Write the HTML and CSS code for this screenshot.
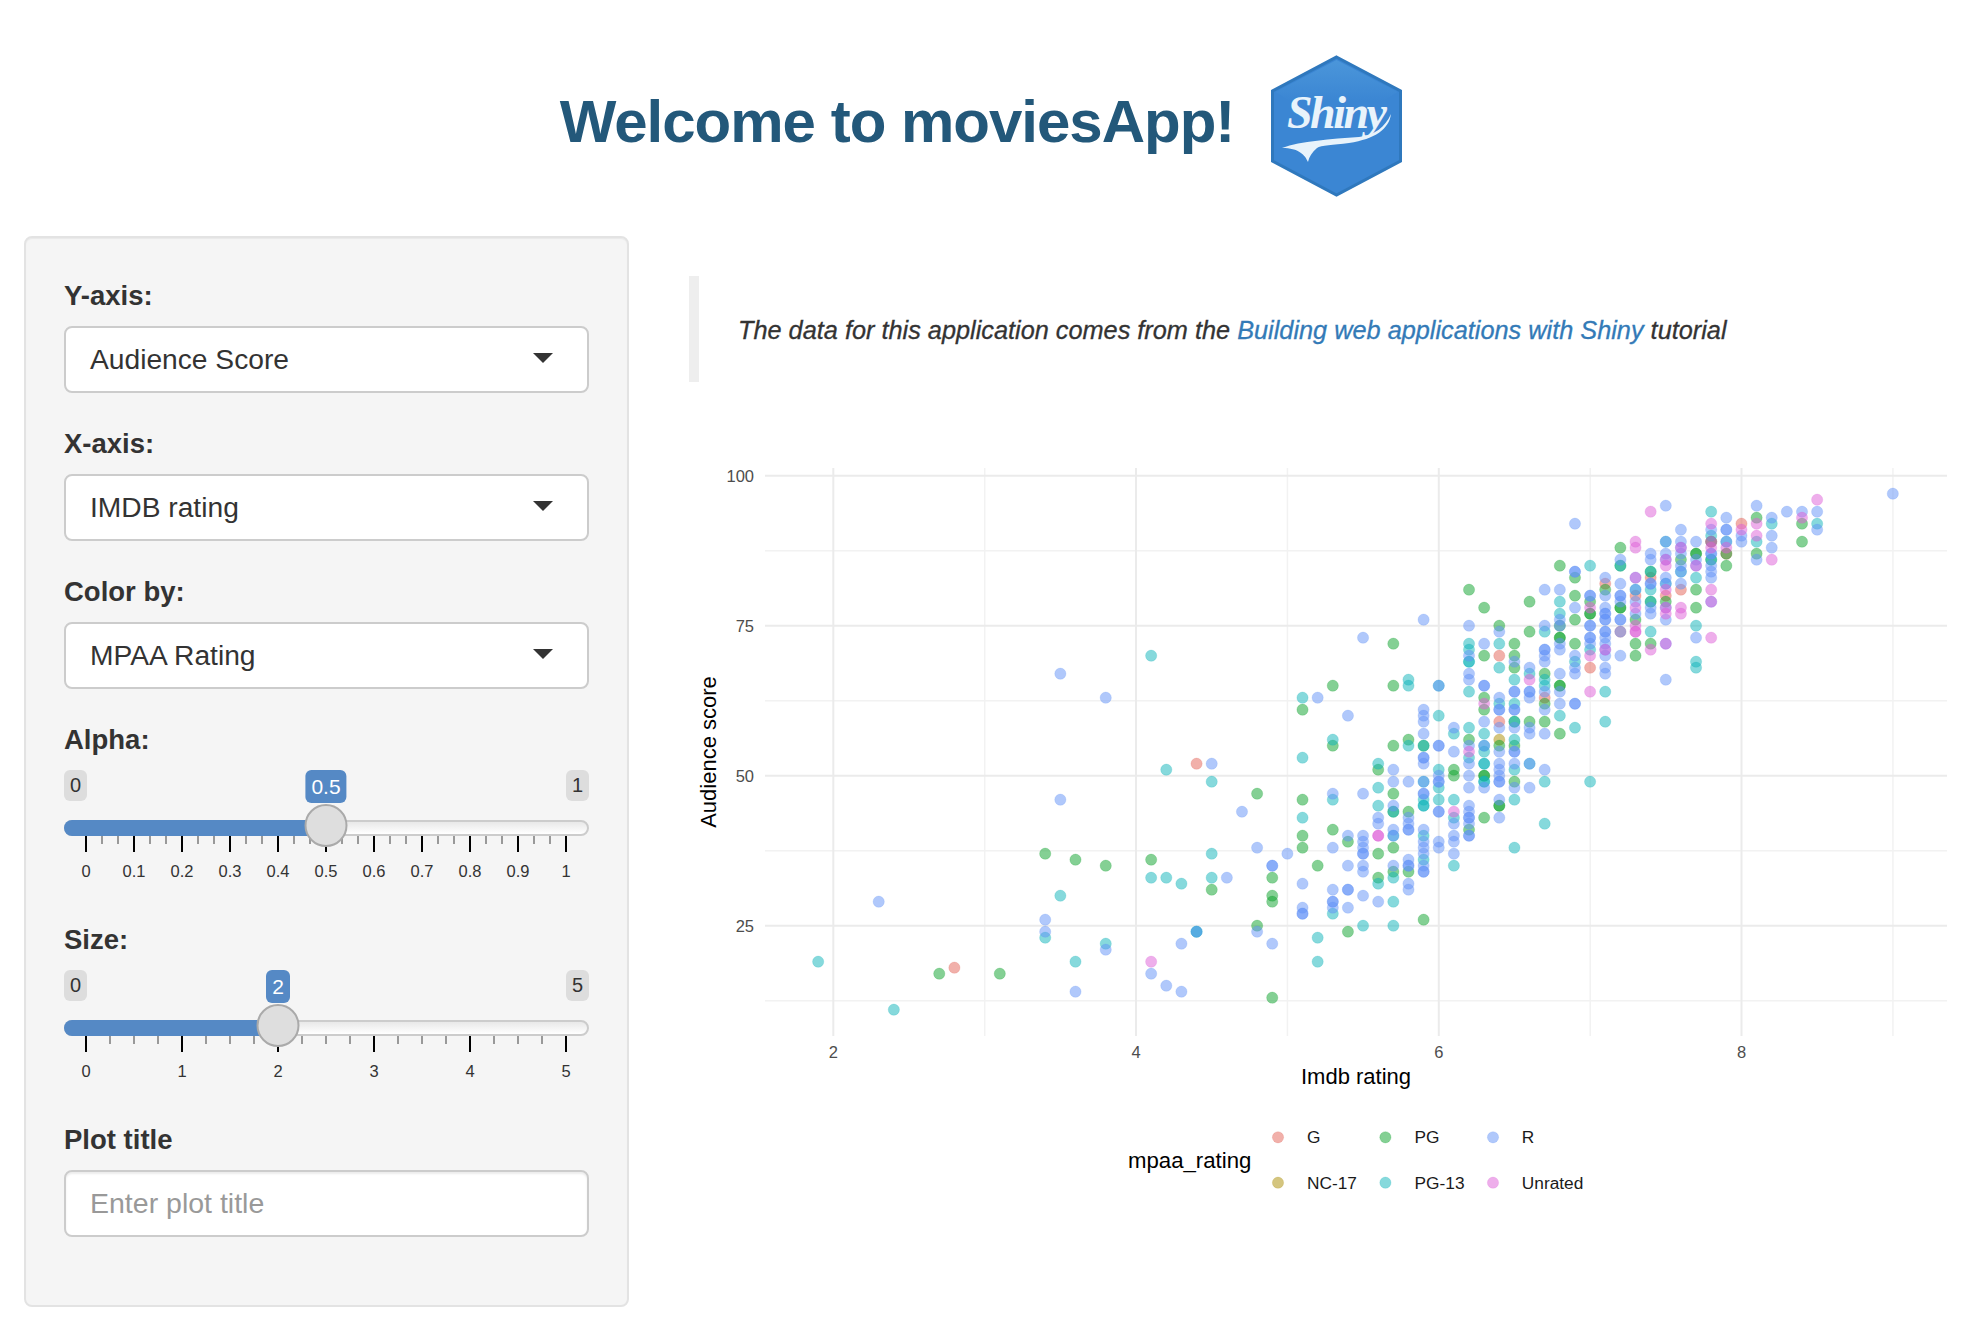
FILE: index.html
```html
<!DOCTYPE html>
<html lang="en">
<head>
    <meta charset="UTF-8">
    <meta name="viewport" content="width=device-width, initial-scale=1.0">
    <title>moviesApp</title>
    <link rel="stylesheet" href="styles.css">
</head>
<body>
    <header class="app-header">
        <h1>Welcome to moviesApp!</h1>
        <svg class="shiny-logo" viewBox="0 0 131 142" width="131" height="142">
            <defs>
                <linearGradient id="hexShine" x1="0" y1="0" x2="0" y2="1">
                    <stop offset="0" stop-color="#4b96da"/>
                    <stop offset="1" stop-color="#3b86d3"/>
                </linearGradient>
            </defs>
            <polygon class="hex" points="65.5,2 129.5,36 129.5,106 65.5,140 1.5,106 1.5,36"/>
            <polygon class="hex-top" points="65.5,5 126.500,37 112,46 19,46 4.500,37"/>
            <text class="hex-word" x="16" y="73" textLength="100">Shiny</text>
            <path class="hex-word" d="M11 93 C30 86 60 84 88 82 C104 80 114 72 120 59 C118 74 104 84 78 88 C62 90 50 90 46 93 C41 97 38 102 37 107 C34 100 28 93 11 93 Z"/>
        </svg>
    </header>

    <div class="layout">
        <aside class="well">
            <div class="form-group">
                <label>Y-axis:</label>
                <div class="select-box"><span>Audience Score</span><i class="caret"></i></div>
            </div>
            <div class="form-group">
                <label>X-axis:</label>
                <div class="select-box"><span>IMDB rating</span><i class="caret"></i></div>
            </div>
            <div class="form-group">
                <label>Color by:</label>
                <div class="select-box"><span>MPAA Rating</span><i class="caret"></i></div>
            </div>

            <div class="form-group slider-group">
                <label>Alpha:</label>
                <div class="slider">
                    <div class="slider-limits"><span>0</span><span>1</span></div>
                    <div class="slider-track">
                        <div class="slider-rail">
                            <div class="slider-fill" style="width: calc(50% + 22px)"></div>
                            <div class="slider-value" style="left: 50%">0.5</div>
                            <div class="slider-handle" style="left: 50%"></div>
                        </div>
                    </div>
                    <div class="tick-row">
                        <i class="major"></i><i></i><i></i><i class="major"></i><i></i><i></i><i class="major"></i><i></i><i></i><i class="major"></i><i></i><i></i><i class="major"></i><i></i><i></i><i class="major"></i><i></i><i></i><i class="major"></i><i></i><i></i><i class="major"></i><i></i><i></i><i class="major"></i><i></i><i></i><i class="major"></i><i></i><i></i><i class="major"></i>
                    </div>
                    <div class="tick-labels">
                        <span>0</span><span>0.1</span><span>0.2</span><span>0.3</span><span>0.4</span><span>0.5</span><span>0.6</span><span>0.7</span><span>0.8</span><span>0.9</span><span>1</span>
                    </div>
                </div>
            </div>

            <div class="form-group slider-group">
                <label>Size:</label>
                <div class="slider">
                    <div class="slider-limits"><span>0</span><span>5</span></div>
                    <div class="slider-track">
                        <div class="slider-rail">
                            <div class="slider-fill" style="width: calc(40% + 22px)"></div>
                            <div class="slider-value" style="left: 40%">2</div>
                            <div class="slider-handle" style="left: 40%"></div>
                        </div>
                    </div>
                    <div class="tick-row">
                        <i class="major"></i><i></i><i></i><i></i><i class="major"></i><i></i><i></i><i></i><i class="major"></i><i></i><i></i><i></i><i class="major"></i><i></i><i></i><i></i><i class="major"></i><i></i><i></i><i></i><i class="major"></i>
                    </div>
                    <div class="tick-labels">
                        <span>0</span><span>1</span><span>2</span><span>3</span><span>4</span><span>5</span>
                    </div>
                </div>
            </div>

            <div class="form-group">
                <label for="plotTitle">Plot title</label>
                <input type="text" id="plotTitle" placeholder="Enter plot title">
            </div>
        </aside>

        <main class="main-panel">
            <blockquote class="note">
                <em>The data for this application comes from the <a href="#">Building web applications with Shiny</a> tutorial</em>
            </blockquote>

            <!-- viewBox uses page pixels so the plot scales below match the screenshot -->
            <svg id="plot" class="plot" viewBox="689 440 1293 800" width="1293" height="800">
                <g class="grid-minor">
                    <line x1="765" x2="1947" y1="550.700" y2="550.700"/>
                    <line x1="765" x2="1947" y1="700.700" y2="700.700"/>
                    <line x1="765" x2="1947" y1="850.700" y2="850.700"/>
                    <line x1="765" x2="1947" y1="1000.700" y2="1000.700"/>
                    <line x1="984.700" x2="984.700" y1="468" y2="1036"/>
                    <line x1="1287.400" x2="1287.400" y1="468" y2="1036"/>
                    <line x1="1590.200" x2="1590.200" y1="468" y2="1036"/>
                    <line x1="1892.900" x2="1892.900" y1="468" y2="1036"/>
                </g>
                <g class="grid-major">
                    <line x1="765" x2="1947" y1="475.700" y2="475.700"/>
                    <line x1="765" x2="1947" y1="625.700" y2="625.700"/>
                    <line x1="765" x2="1947" y1="775.700" y2="775.700"/>
                    <line x1="765" x2="1947" y1="925.700" y2="925.700"/>
                    <line x1="833.300" x2="833.300" y1="468" y2="1036"/>
                    <line x1="1136" x2="1136" y1="468" y2="1036"/>
                    <line x1="1438.800" x2="1438.800" y1="468" y2="1036"/>
                    <line x1="1741.500" x2="1741.500" y1="468" y2="1036"/>
                </g>
                <g id="points"></g>
                <g class="tick-y">
                    <text x="754" y="482">100</text>
                    <text x="754" y="632">75</text>
                    <text x="754" y="782">50</text>
                    <text x="754" y="932">25</text>
                </g>
                <g class="tick-x">
                    <text x="833.300" y="1058">2</text>
                    <text x="1136" y="1058">4</text>
                    <text x="1438.800" y="1058">6</text>
                    <text x="1741.500" y="1058">8</text>
                </g>
                <text class="axis-title" x="1356" y="1083.500">Imdb rating</text>
                <text class="axis-title" transform="translate(716 752) rotate(-90)">Audience score</text>

                <text class="legend-title" x="1128" y="1168">mpaa_rating</text>
                <g id="legend" class="legend-labels">
                    <text x="1307" y="1143">G</text>
                    <text x="1307" y="1188.500">NC-17</text>
                    <text x="1414.600" y="1143">PG</text>
                    <text x="1414.600" y="1188.500">PG-13</text>
                    <text x="1521.800" y="1143">R</text>
                    <text x="1521.800" y="1188.500">Unrated</text>
                </g>
            </svg>
        </main>
    </div>

    <script src="plot.js"></script>
</body>
</html>
```

FILE: styles.css
```css
/* Basic page */
body {
    font-family: "Liberation Sans", Arial, sans-serif;
    color: #333;
    background-color: #fff;
    margin: 0;
}

/* Title row */
.app-header {
    display: flex;
    align-items: center;
    justify-content: center;
    height: 236px;
    padding-top: 16px;
    padding-right: 20px;
    box-sizing: border-box;
}

.app-header h1 {
    margin: 0 37px 10px 0;
    font-size: 60px;
    font-weight: bold;
    letter-spacing: -1px;
    color: #23587a;
}

.hex {
    fill: #3b86d3;
    stroke: #2f78bd;
    stroke-width: 3;
}

.hex-top {
    fill: url(#hexShine);
}

.hex-word {
    fill: #e8f3fb;
}

text.hex-word {
    font-family: "Liberation Serif", serif;
    font-size: 46px;
    font-style: italic;
    font-weight: bold;
}

/* Main layout */
.layout {
    display: flex;
    align-items: flex-start;
    padding-left: 24px;
}

.well {
    width: 605px;
    height: 1071px;
    box-sizing: border-box;
    padding: 40px 38px 0;
    background-color: #f5f5f5;
    border: 2px solid #e3e3e3;
    border-radius: 8px;
    box-shadow: inset 0 1px 1px rgba(0, 0, 0, 0.05);
}

.form-group {
    margin-bottom: 33px;
}

.form-group label {
    display: block;
    height: 36px;
    line-height: 36px;
    margin-bottom: 12px;
    font-size: 27.500px;
    font-weight: bold;
}

.slider-group {
    margin-bottom: 0;
}

/* Select boxes */
.select-box {
    display: flex;
    align-items: center;
    justify-content: space-between;
    height: 67px;
    box-sizing: border-box;
    padding: 0 34px 0 24px;
    background-color: #fff;
    border: 2px solid #ccc;
    border-radius: 8px;
    font-size: 28.200px;
}

.caret {
    width: 0;
    height: 0;
    border-top: 10px solid #333;
    border-left: 10px solid transparent;
    border-right: 10px solid transparent;
    margin-top: -4px;
}

#plotTitle {
    display: block;
    width: 100%;
    height: 67px;
    box-sizing: border-box;
    padding: 0 24px;
    font-family: inherit;
    font-size: 28.500px;
    color: #333;
    background-color: #fff;
    border: 2px solid #ccc;
    border-radius: 8px;
    box-shadow: inset 0 2px 2px rgba(0, 0, 0, 0.075);
}

#plotTitle::placeholder {
    color: #999;
    opacity: 1;
}

/* Sliders */
.slider {
    height: 152px;
}

.slider-limits {
    display: flex;
    justify-content: space-between;
    height: 50px;
}

.slider-limits span {
    height: 31px;
    min-width: 23px;
    box-sizing: border-box;
    padding: 0 1px;
    text-align: center;
    line-height: 30px;
    font-size: 20px;
    background-color: #ddd;
    border-radius: 6px;
}

.slider-track {
    position: relative;
    height: 16px;
    box-sizing: border-box;
    background: linear-gradient(to bottom, #ddd -50%, #fff);
    border: 2px solid #ccc;
    border-radius: 8px;
}

.slider-rail {
    position: absolute;
    top: 0;
    left: 20px;
    right: 21px;
}

.slider-fill {
    position: absolute;
    top: -2px;
    left: -22px;
    height: 16px;
    background-color: #5589c5;
    border-radius: 8px 0 0 8px;
}

.slider-value {
    position: absolute;
    top: -52px;
    transform: translateX(-50%);
    height: 33px;
    min-width: 24px;
    box-sizing: border-box;
    padding: 0 6px;
    line-height: 33px;
    text-align: center;
    font-size: 21px;
    color: #fff;
    background-color: #5589c5;
    border-radius: 6px;
}

.slider-handle {
    position: absolute;
    top: -18px;
    transform: translateX(-50%);
    width: 43px;
    height: 43px;
    box-sizing: border-box;
    background-color: #dedede;
    border: 2px solid #aaa;
    border-radius: 50%;
}

.tick-row,
.tick-labels {
    display: flex;
    justify-content: space-between;
    padding: 0 22px 0 21px;
}

.tick-row {
    height: 16px;
}

.tick-row i {
    width: 2px;
    height: 8px;
    background-color: #999;
}

.tick-row i.major {
    height: 16px;
    background-color: #000;
}

.tick-labels {
    margin-top: 9px;
    line-height: 20px;
    font-size: 16.500px;
}

.tick-labels span {
    display: flex;
    justify-content: center;
    width: 2px;
}

/* Right side */
.main-panel {
    margin-left: 60px;
    padding-top: 40px;
}

.note {
    display: flex;
    align-items: center;
    height: 106px;
    box-sizing: border-box;
    margin: 0 0 58px;
    padding: 3px 0 0 39px;
    border-left: 10px solid #eee;
    font-size: 25.300px;
    -webkit-text-stroke: 0.300px;
}

.note a {
    color: #337ab7;
    text-decoration: none;
}

.plot {
    display: block;
}

.grid-major line {
    stroke: #ebebeb;
    stroke-width: 2;
}

.grid-minor line {
    stroke: #f2f2f2;
    stroke-width: 1.500;
}

.tick-y text,
.tick-x text {
    font-size: 16.500px;
    fill: #4d4d4d;
}

.tick-y text {
    text-anchor: end;
}

.tick-x text,
.axis-title {
    text-anchor: middle;
}

.axis-title {
    font-size: 22px;
    fill: #000;
}

.legend-title {
    font-size: 22.200px;
    fill: #000;
}

.legend-labels text {
    font-size: 17.300px;
    fill: #1a1a1a;
}

.dot {
    fill-opacity: 0.5;
    stroke-opacity: 0.2;
    stroke-width: 1;
}
```

FILE: plot.js
```js
// Scatter points by rating group: { imdb rating: [audience scores] }
const groups = [
    { name: "G", color: "#E36155", points: {
        2.8: [18], 4.4: [52], 6.4: [70, 59], 6.7: [63], 7.0: [68], 7.1: [82], 7.2: [74], 7.3: [80],
        7.4: [83], 7.5: [80], 7.6: [81], 7.8: [89], 7.9: [87], 8.0: [92]
    }},
    { name: "NC-17", color: "#A98B00", points: { 6.4: [56] }},
    { name: "PG", color: "#09A129", points: {
        2.7: [17], 3.1: [17], 3.4: [37], 3.6: [36], 3.8: [35], 4.1: [36], 4.5: [31], 4.8: [47, 25],
        4.9: [33, 30, 29, 13], 5.1: [61, 46, 40, 38], 5.2: [35], 5.3: [65, 55, 41], 5.4: [39, 24],
        5.6: [51, 37, 33], 5.7: [72, 65, 55, 47, 44, 38, 34], 5.8: [56, 44, 34], 5.9: [55, 26],
        6.1: [51, 50], 6.2: [81, 56, 41], 6.3: [78, 70, 63, 61, 50, 50, 43], 6.4: [75, 55, 45, 45],
        6.5: [72, 70, 68, 59, 55, 49], 6.6: [79, 74, 59], 6.7: [67, 62, 59],
        6.8: [85, 75, 73, 73, 65, 65, 57], 6.9: [83, 80, 76, 72], 7.0: [79, 77, 77], 7.1: [81],
        7.2: [88, 85, 78, 78], 7.3: [76, 72, 70], 7.4: [84, 79, 72], 7.5: [79], 7.6: [86],
        7.7: [87, 87, 81, 78], 7.8: [89, 86], 7.9: [87, 85], 8.1: [93, 87], 8.4: [92, 89]
    }},
    { name: "PG-13", color: "#0DB3B9", points: {
        1.9: [19], 2.4: [11], 3.4: [23], 3.5: [30], 3.6: [19], 3.8: [22], 4.1: [70, 33], 4.2: [51, 33],
        4.3: [32], 4.4: [24, 24], 4.5: [49, 37, 33], 5.1: [63, 53, 43], 5.2: [23, 19], 5.3: [56, 46, 27],
        5.5: [25], 5.6: [52, 48, 45, 32], 5.7: [44, 40, 33, 29, 25], 5.8: [66, 65, 55],
        5.9: [55, 49, 46, 45, 45, 40, 36], 6.0: [65, 60, 51, 48, 46], 6.1: [57, 46, 43, 35],
        6.2: [72, 71, 69, 69, 64, 58, 53], 6.3: [57, 55, 54, 52, 52, 49, 49], 6.4: [72, 68, 62],
        6.5: [66, 62, 59, 56, 51, 46, 38], 6.6: [67, 52], 6.7: [74, 66, 65, 49, 42], 6.8: [79, 77, 60],
        6.9: [69, 58], 7.0: [85, 71, 49], 7.1: [64, 59], 7.2: [85], 7.3: [81], 7.4: [84, 81, 79, 74],
        7.5: [89, 82], 7.6: [84], 7.7: [83, 75, 69, 68], 7.8: [94, 90, 86], 7.9: [89], 8.1: [89],
        8.2: [92], 8.5: [92]
    }},
    { name: "R", color: "#6191F7", points: {
        2.3: [29], 3.4: [26, 24], 3.5: [67, 46], 3.6: [14], 3.8: [63, 21], 4.1: [17], 4.2: [15],
        4.3: [22, 14], 4.4: [24], 4.5: [52], 4.6: [33], 4.7: [44], 4.8: [38, 24], 4.9: [35, 35, 22],
        5.0: [37], 5.1: [32, 28, 27, 27], 5.2: [63], 5.3: [47, 38, 31, 29, 29, 28],
        5.4: [60, 40, 35, 31, 31, 28], 5.5: [73, 47, 40, 39, 38, 37, 37, 35, 34, 30], 5.6: [43, 42, 29],
        5.7: [51, 49, 45, 41, 40, 35], 5.8: [49, 43, 42, 41, 41, 36, 35, 35, 32, 31],
        5.9: [76, 61, 60, 59, 57, 53, 53, 52, 49, 47, 47, 41, 39, 38, 37, 35, 34, 34],
        6.0: [65, 55, 55, 50, 49, 49, 44, 44, 39, 38], 6.1: [58, 54, 42, 40, 39, 37],
        6.2: [75, 70, 67, 66, 55, 52, 50, 48, 45, 44, 43, 43, 42, 40, 40], 6.3: [72, 65, 65, 59, 55, 48],
        6.4: [74, 63, 61, 61, 58, 54, 52, 51, 50, 49, 49, 46, 43],
        6.5: [69, 64, 64, 61, 61, 58, 54, 54, 52, 48], 6.6: [68, 64, 64, 63, 58, 57, 52, 48],
        6.7: [81, 75, 71, 71, 70, 69, 64, 61, 57, 51], 6.8: [81, 76, 75, 72, 71, 67, 64, 62],
        6.9: [92, 84, 84, 78, 70, 68, 67, 62, 62], 7.0: [80, 80, 75, 75, 73, 73, 72],
        7.1: [83, 80, 78, 77, 77, 76, 76, 74, 74, 73, 72, 71, 70, 68, 67],
        7.2: [86, 82, 80, 80, 79, 76, 76, 74, 70], 7.3: [83, 81, 79, 77], 7.4: [87, 86, 82, 82, 78, 77],
        7.5: [95, 89, 87, 86, 83, 82, 78, 76, 72, 66], 7.6: [91, 89, 88, 87, 85, 84, 82],
        7.7: [89, 86, 85, 73], 7.8: [91, 87, 87, 85, 84, 83, 79], 7.9: [93, 91, 91, 89], 8.0: [90, 89],
        8.1: [95, 86], 8.2: [93, 90, 88], 8.3: [94], 8.4: [94], 8.5: [94, 91], 9.0: [97]
    }},
    { name: "Unrated", color: "#DD5DD7", points: {
        4.1: [19], 5.6: [40, 40], 6.1: [44], 6.2: [54], 6.3: [62], 6.6: [66], 7.0: [78, 70, 64], 7.1: [71],
        7.3: [89, 88, 83, 78, 75, 74, 74], 7.4: [94, 71], 7.5: [86, 85, 81, 78, 77, 72], 7.6: [88, 78, 77],
        7.7: [85], 7.8: [92, 89, 88, 81, 79, 73], 7.9: [88], 8.0: [91], 8.1: [92, 90], 8.2: [86],
        8.4: [93], 8.5: [96]
    }}
];

// Legend marker spots, same order as the groups
const legendSpots = [[1278, 1137.3], [1278, 1182.7], [1385.4, 1137.3], [1385.4, 1182.7], [1493, 1137.3], [1493, 1182.7]];

const SVG_NS = "http://www.w3.org/2000/svg";

function addDot(parent, cx, cy, color) {
    const dot = document.createElementNS(SVG_NS, "circle");
    dot.setAttribute("class", "dot");
    dot.setAttribute("cx", cx);
    dot.setAttribute("cy", cy);
    dot.setAttribute("r", 5.6);
    dot.setAttribute("fill", color);
    dot.setAttribute("stroke", color);
    parent.appendChild(dot);
}

function drawPlot() {
    const pointsLayer = document.getElementById("points");
    const legend = document.getElementById("legend");

    groups.forEach((group, index) => {
        Object.keys(group.points).forEach((rating) => {
            group.points[rating].forEach((score) => {
                const x = 833.3 + (parseFloat(rating) - 2) * 151.36;
                const y = 475.7 + (100 - score) * 6;
                addDot(pointsLayer, x, y, group.color);
            });
        });
        addDot(legend, legendSpots[index][0], legendSpots[index][1], group.color);
    });
}

document.addEventListener("DOMContentLoaded", drawPlot);
```
